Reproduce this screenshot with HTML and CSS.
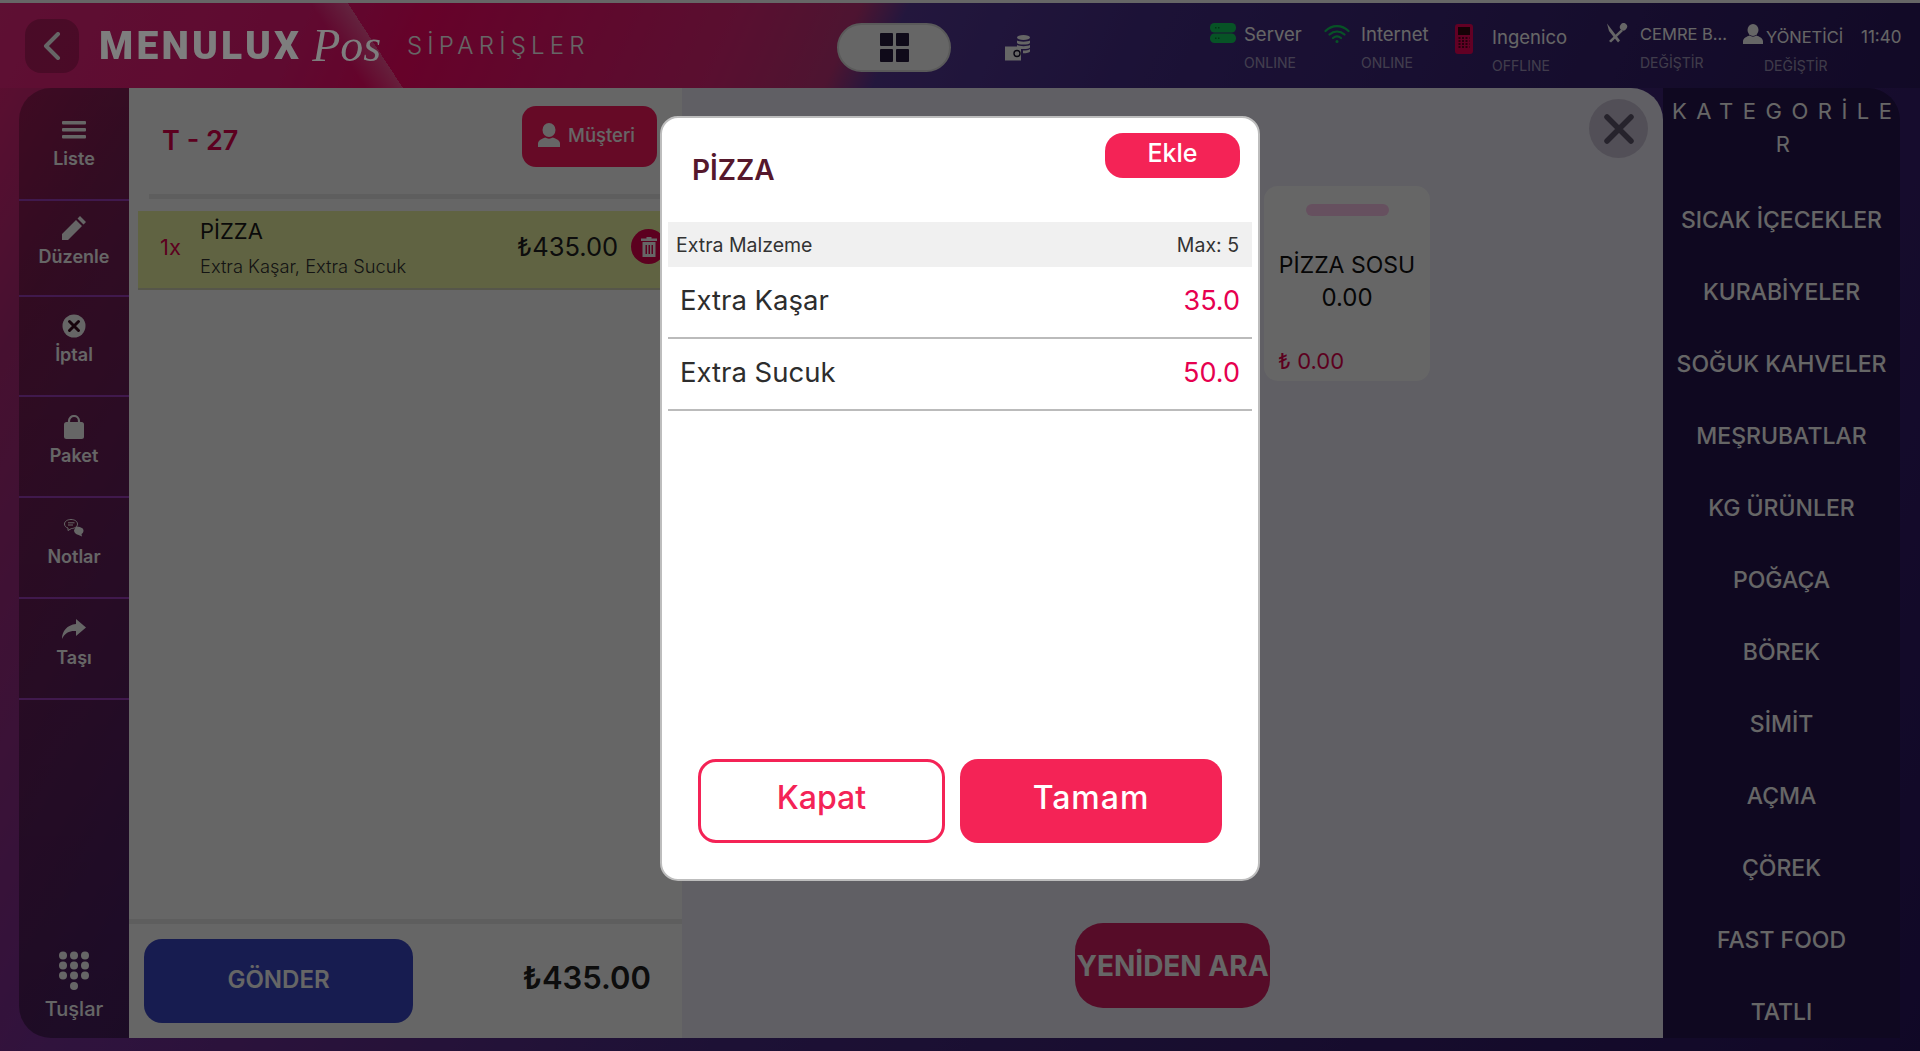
FILE: index.html
```html
<!DOCTYPE html>
<html lang="tr">
<head>
    <title>Menulux Pos - Siparişler</title>
    <meta charset="UTF-8" />
    <meta name="viewport" content="width=device-width, initial-scale=1.0" />
    <link rel="stylesheet" href="styles.css">
</head>
<body>
    <div class="shell">
        <header class="topbar">
            <div class="top-left">
                <button class="back-btn" title="Geri">
                    <svg width="18" height="28" viewBox="0 0 18 28"><path d="M15 2 3 14l12 12" fill="none" stroke="#fff" stroke-width="4" stroke-linecap="round" stroke-linejoin="round"/></svg>
                </button>
                <div class="logo">
                    <span class="logo-word">MENULUX</span>
                    <span class="logo-pos">Pos</span>
                </div>
                <span class="page-title">SİPARİŞLER</span>
            </div>

            <div class="view-toggle">
                <span class="tile"></span><span class="tile"></span><span class="tile"></span><span class="tile"></span>
            </div>

            <svg class="wallet" width="26" height="26" viewBox="0 0 26 26">
                <g fill="#fff">
                    <ellipse cx="18.5" cy="2.5" rx="6.5" ry="2.5"/>
                    <path d="M12 5.5c2 1.5 11 1.500 13 0v2.500c-1 2-12 2-13 0zM12 10c2 1.500 11 1.500 13 0v2.500c-1 2-12 2-13 0zM18 15.500c3 0 6-.5 7-1.500v2.500c-.5 1-3 1.800-7 1.800z"/>
                    <path d="M0 11.500h16v14H0z"/>
                </g>
                <circle cx="12" cy="18.500" r="3" fill="none" stroke="#17102c" stroke-width="1.400"/>
            </svg>

            <div class="status-bar">
                <div class="status status-server">
                    <svg width="26" height="20" viewBox="0 0 26 20">
                        <rect width="26" height="9.500" rx="4.500" fill="#12d060"/><rect y="10.500" width="26" height="9.500" rx="4.500" fill="#12d060"/>
                        <path d="M5 4.700h5M5 15.200h5" stroke="#083" stroke-width="1.500" stroke-dasharray="1.500 1.500"/>
                    </svg>
                    <div><p class="status-name">Server</p><p class="status-sub">ONLINE</p></div>
                </div>
                <div class="status status-net">
                    <svg width="26" height="20" viewBox="0 0 26 20" fill="none" stroke="#12d060" stroke-width="2.200" stroke-linecap="round">
                        <path d="M1.500 7c6.500-6.500 16.500-6.500 23 0M5.500 10.500c4.500-4 10.500-4 15 0M9 14c2.500-2 5.500-2 8 0"/>
                        <circle cx="13" cy="17.500" r="1.500" fill="#12d060" stroke="none"/>
                    </svg>
                    <div><p class="status-name">Internet</p><p class="status-sub">ONLINE</p></div>
                </div>
                <div class="status status-pos">
                    <svg width="18" height="30" viewBox="0 0 18 30">
                        <rect width="18" height="30" rx="3" fill="#f5005a"/>
                        <rect x="3" y="3" width="12" height="8" fill="#33060f"/>
                        <path d="M3.500 14h11M3.500 17h11M3.500 20h11M3.500 23h11" stroke="#33060f" stroke-width="1.600" stroke-dasharray="2 1.500"/>
                    </svg>
                    <div><p class="status-name">Ingenico</p><p class="status-sub">OFFLINE</p></div>
                </div>
                <div class="status status-venue">
                    <svg width="22" height="20" viewBox="0 0 22 20" fill="#fff">
                        <path d="M1 .5 14 17.500 12 19.500 3 8z"/>
                        <ellipse cx="17.500" cy="3.800" rx="3.500" ry="3.800" transform="rotate(35 17.500 3.800)"/>
                        <path d="M15 6.500 17 8 5 19.500 3 18z"/>
                    </svg>
                    <div><p class="status-name status-small">CEMRE B...</p><p class="status-sub">DEĞİŞTİR</p></div>
                </div>
                <div class="status status-user">
                    <svg width="20" height="20" viewBox="0 0 20 20" fill="#fff">
                        <ellipse cx="10" cy="6" rx="5.500" ry="6"/>
                        <path d="M0 20v-2.500C0 14 4 12.500 6.500 11.500c2 1.500 5 1.500 7 0 2.500 1 6.500 2.500 6.500 6V20z"/>
                    </svg>
                    <div><p class="status-name status-small">YÖNETİCİ</p><p class="status-sub">DEĞİŞTİR</p></div>
                </div>
                <span class="clock">11:40</span>
            </div>
        </header>

        <div class="content">
            <nav class="sidebar">
                <div class="side-item side-liste">
                    <svg width="24" height="18" viewBox="0 0 24 18" fill="#fff"><rect width="24" height="3.500" rx="1"/><rect y="7" width="24" height="3.500" rx="1"/><rect y="14" width="24" height="3.500" rx="1"/></svg>
                    <span>Liste</span>
                </div>
                <div class="side-item side-edit">
                    <svg width="24" height="24" viewBox="0 0 24 24" fill="#fff"><path d="M0 24v-6L14 4l6 6L6 24zM15.500 2.500 18 0l6 6-2.500 2.500z"/></svg>
                    <span>Düzenle</span>
                </div>
                <div class="side-item side-cancel">
                    <svg width="24" height="24" viewBox="0 0 24 24"><circle cx="12" cy="12" r="11.500" fill="#fff"/><path d="m7.500 7.500 9 9m0-9-9 9" stroke="#3a0a20" stroke-width="3" stroke-linecap="round"/></svg>
                    <span>İptal</span>
                </div>
                <div class="side-item">
                    <svg width="20" height="24" viewBox="0 0 20 24"><rect y="7" width="20" height="17" rx="2.500" fill="#fff"/><path d="M5 11V6a5 5 0 0 1 10 0v5" fill="none" stroke="#fff" stroke-width="2.200"/></svg>
                    <span>Paket</span>
                </div>
                <div class="side-item">
                    <svg width="20" height="18" viewBox="0 0 20 18">
                        <path d="M12 7.500c3 0 7.500 1 7.500 4 0 2-1 3-2 3.500l.5 2.500-4-1.800c-2-.5-4-2-4-4.500z" fill="#fff"/>
                        <path d="M7 .5c3.500 0 6.500 1.800 6.500 4.500S10.500 9.500 7.500 9.500L4 11.500V9C2 8.500.5 7 .5 5 .5 2.300 3.500.5 7 .5z" fill="#6a1a4a" stroke="#fff"/>
                        <path d="M4 3.800h6.500M4 6h5" stroke="#fff"/>
                    </svg>
                    <span>Notlar</span>
                </div>
                <div class="side-item">
                    <svg width="24" height="20" viewBox="0 0 24 20" fill="#fff"><path d="M14 0l10 8.500L14 17v-5C8 11.500 3 13.500 0 20c0-8 5-14 14-15z"/></svg>
                    <span>Taşı</span>
                </div>
                <div class="side-keys">
                    <svg width="30" height="40" viewBox="0 0 30 40" fill="#fff">
                        <ellipse cx="4" cy="4.500" rx="4" ry="4"/><ellipse cx="15" cy="4.500" rx="4" ry="4"/><ellipse cx="26" cy="4.500" rx="4" ry="4"/>
                        <ellipse cx="4" cy="14.500" rx="4" ry="4"/><ellipse cx="15" cy="14.500" rx="4" ry="4"/><ellipse cx="26" cy="14.500" rx="4" ry="4"/>
                        <ellipse cx="4" cy="24.500" rx="4" ry="4"/><ellipse cx="15" cy="24.500" rx="4" ry="4"/><ellipse cx="26" cy="24.500" rx="4" ry="4"/>
                        <ellipse cx="15" cy="35" rx="4" ry="4"/>
                    </svg>
                    <span>Tuşlar</span>
                </div>
            </nav>

            <section class="ticket">
                <div class="ticket-head">
                    <h2 class="table-no">T - 27</h2>
                    <button class="customer-btn">
                        <svg width="22" height="24" viewBox="0 0 22 24" fill="#fff"><ellipse cx="11" cy="7" rx="6.500" ry="7"/><path d="M0 24v-3.500C0 17 5 15.500 7 14.500c2.500 1.500 5.500 1.500 8 0 2 1 7 2.500 7 6V24z"/></svg>
                        Müşteri
                    </button>
                </div>
                <div class="ticket-rule"></div>
                <div class="order-row">
                    <span class="qty">1x</span>
                    <div class="order-info">
                        <p class="order-name">PİZZA</p>
                        <p class="order-extra">Extra Kaşar, Extra Sucuk</p>
                    </div>
                    <span class="order-price">₺435.00</span>
                    <span class="trash">
                        <svg width="16" height="20" viewBox="0 0 16 20" fill="#fff"><path d="M5.500 0h5v1.500H16V4H0V1.500h5.500zM1.500 5h13v15h-13zM4.500 8v9h1.500V8zm3 0v9H9V8zm3 0v9H12V8z" fill-rule="evenodd"/></svg>
                    </span>
                </div>
                <div class="ticket-foot">
                    <button class="send-btn">GÖNDER</button>
                    <span class="total">₺435.00</span>
                </div>
            </section>

            <section class="products">
                <button class="close-btn" title="Kapat">
                    <svg width="30" height="30" viewBox="0 0 30 30"><path d="m3 3 24 24m0-24L3 27" stroke="#60586f" stroke-width="5.500" stroke-linecap="round"/></svg>
                </button>
                <div class="product-card">
                    <div class="product-pill"></div>
                    <p class="product-name">PİZZA SOSU</p>
                    <p class="product-sub">0.00</p>
                    <p class="product-price">₺ 0.00</p>
                </div>
                <button class="retry-btn">YENİDEN ARA</button>
            </section>

            <aside class="categories">
                <h3 class="cat-title">KATEGORİLE<br>R</h3>
                <ul class="cat-list">
                    <li>SICAK İÇECEKLER</li>
                    <li>KURABİYELER</li>
                    <li>SOĞUK KAHVELER</li>
                    <li>MEŞRUBATLAR</li>
                    <li>KG ÜRÜNLER</li>
                    <li>POĞAÇA</li>
                    <li>BÖREK</li>
                    <li>SİMİT</li>
                    <li>AÇMA</li>
                    <li>ÇÖREK</li>
                    <li>FAST FOOD</li>
                    <li>TATLI</li>
                </ul>
            </aside>
        </div>
    </div>

    <div class="backdrop"></div>

    <div class="modal">
        <div class="modal-head">
            <h2 class="modal-title">PİZZA</h2>
            <button class="add-btn">Ekle</button>
        </div>
        <div class="group-row"><span>Extra Malzeme</span><span>Max: 5</span></div>
        <div class="option-row"><span>Extra Kaşar</span><span class="option-price">35.0</span></div>
        <div class="option-row"><span>Extra Sucuk</span><span class="option-price">50.0</span></div>
        <div class="modal-foot">
            <button class="btn-outline">Kapat</button>
            <button class="btn-solid">Tamam</button>
        </div>
    </div>
</body>
</html>
```

FILE: styles.css
```css
* {
    box-sizing: border-box;
}

body {
    font-family: 'Inter', 'Open Sans', sans-serif;
    margin: 0;
    padding-top: 3px;
    background: #fff;
    height: 1051px;
    overflow: hidden;
}

p, h2, h3, ul {
    margin: 0;
    padding: 0;
}

button {
    font-family: inherit;
    border: none;
    padding: 0;
}

.shell {
    height: 1048px;
    background: linear-gradient(120deg, #f02478 0%, #b02a78 8%, #78309a 26%, #4a2c86 52%, #2a1560 100%);
}

/* Top bar */
.topbar {
    height: 85px;
    display: flex;
    align-items: center;
    color: #fff;
    background:
        linear-gradient(57deg, transparent 18.5%, rgba(255, 255, 255, 0.3) 20.4%, transparent 20.4%),
        linear-gradient(114deg, #eb2880 0%, #ee1978 16%, #ff0568 22%, #df2678 38%, #c1347a 44%, #583a9a 46.5%, #462d88 60%, #2d1960 100%);
}

.top-left {
    width: 837px;
    padding-left: 25px;
    display: flex;
    align-items: center;
}

.back-btn {
    width: 54px;
    height: 54px;
    border-radius: 16px;
    background: rgba(0, 0, 0, 0.22);
    display: flex;
    align-items: center;
    justify-content: center;
}

/* the logo picture is not dimmed as much as the rest */
.logo {
    margin-left: 20px;
    width: 287px;
    display: flex;
    align-items: center;
    color: #7e7e7e;
    position: relative;
    z-index: 2;
}

.logo-word {
    font-family: 'Roboto', sans-serif;
    font-weight: 900;
    font-size: 39px;
    letter-spacing: 3.2px;
}

.logo-pos {
    font-family: 'Liberation Serif', serif;
    font-style: italic;
    font-size: 46px;
    margin-left: 10px;
}

.page-title {
    font-size: 24px;
    font-weight: 300;
    letter-spacing: 5.2px;
    margin-left: 21px;
}

.view-toggle {
    width: 114px;
    height: 49px;
    margin-top: 4px;
    border-radius: 25px;
    background: #fff;
    border: 2px solid #e0e0e0;
    display: grid;
    grid-template-columns: 13px 13px;
    grid-template-rows: 13px 13px;
    gap: 3px;
    justify-content: center;
    align-content: center;
}

.tile {
    background: #26193f;
    border-radius: 1px;
}

.wallet {
    margin-left: 54px;
    margin-top: 4px;
}

.status-bar {
    margin-left: auto;
    margin-right: 20px;
    width: 690px;
    display: grid;
    grid-template-columns: 114px 131px 151px 137px 118px 39px;
    align-self: flex-start;
    padding-top: 20px;
}

.status {
    display: flex;
    align-items: flex-start;
    gap: 8px;
}

.status-net {
    gap: 11px;
}

.status-pos {
    gap: 19px;
}

.status-venue {
    gap: 12px;
}

.status-user {
    gap: 3px;
}

.status-pos > div,
.status-user > div {
    padding-top: 3px;
}

.status-pos > svg,
.status-net > svg,
.status-user > svg {
    margin-top: 1px;
}

.status-name {
    font-size: 18.5px;
    line-height: 22px;
}

.status-small {
    font-size: 16.5px;
    white-space: nowrap;
}

.status-sub {
    font-size: 14px;
    line-height: 20px;
    margin-top: 8px;
    color: rgba(255, 255, 255, 0.55);
    white-space: nowrap;
}

.status-user .status-sub {
    margin-left: -2px;
}

.clock {
    font-size: 17px;
    line-height: 22px;
    padding-top: 3px;
    white-space: nowrap;
}

/* Main area */
.content {
    display: flex;
    height: 950px;
    padding-left: 19px;
}

.sidebar {
    width: 110px;
    border-radius: 32px 0 0 32px;
    background: linear-gradient(180deg, rgba(0, 0, 0, 0.28), rgba(0, 0, 0, 0.38));
    color: #fff;
    display: flex;
    flex-direction: column;
}

.side-item {
    height: 101px;
    padding-top: 18px;
    border-bottom: 2px solid #a040c0;
    display: flex;
    flex-direction: column;
    align-items: center;
    font-size: 18px;
    font-weight: 600;
}

.side-item svg {
    height: 24px;
}

.side-item span {
    margin-top: 4px;
    line-height: 26px;
}

.side-liste {
    height: 113px;
    padding-top: 30px;
}

.side-edit {
    height: 96px;
    padding-top: 15px;
}

.side-cancel {
    height: 100px;
    padding-top: 17px;
}

.side-keys {
    margin-top: auto;
    padding-bottom: 16px;
    display: flex;
    flex-direction: column;
    align-items: center;
    font-size: 20px;
    font-weight: 500;
}

.side-keys span {
    margin-top: 5px;
    line-height: 26px;
}

.ticket {
    width: 553px;
    background: #fff;
    display: flex;
    flex-direction: column;
}

.ticket-head {
    height: 106px;
    padding: 18px 25px 0 33px;
    display: flex;
    justify-content: space-between;
}

.table-no {
    font-size: 27px;
    font-weight: 600;
    color: #e6004f;
    padding-top: 18px;
}

.customer-btn {
    width: 135px;
    height: 61px;
    border-radius: 14px;
    background: #ff1a60;
    color: #fff;
    font-size: 18.5px;
    font-weight: 500;
    display: flex;
    align-items: center;
    gap: 8px;
    padding: 0 0 3px 16px;
}

.ticket-rule {
    height: 5px;
    margin-left: 20px;
    background: #ececec;
}

.order-row {
    height: 79px;
    width: 537px;
    margin: 12px 0 0 9px;
    padding-bottom: 6px;
    background: #f0f8a6;
    border-bottom: 2px solid #d8d8b8;
    display: flex;
    align-items: center;
}

.qty {
    width: 62px;
    padding-left: 22px;
    font-size: 22px;
    color: #e6004f;
}

.order-info {
    width: 317px;
}

.order-name {
    font-size: 22px;
    line-height: 30px;
    color: #1b1b1b;
}

.order-extra {
    font-size: 18.3px;
    font-weight: 300;
    line-height: 24px;
    margin-top: 8px;
    color: #333;
}

.order-price {
    width: 100px;
    font-size: 25.5px;
    color: #222;
    white-space: nowrap;
}

.trash {
    width: 35px;
    height: 35px;
    margin-left: 14px;
    border-radius: 50%;
    background: #e6004f;
    display: flex;
    align-items: center;
    justify-content: center;
}

.ticket-foot {
    margin-top: auto;
    height: 119px;
    border-top: 5px solid #ececec;
    padding: 15px 31px 0 15px;
    display: flex;
    justify-content: space-between;
}

.send-btn {
    width: 269px;
    height: 84px;
    border-radius: 18px;
    background: #3b48c8;
    color: #fff;
    font-size: 24px;
    font-weight: 600;
    padding-bottom: 3px;
}

.total {
    font-size: 31px;
    font-weight: 600;
    color: #222;
    line-height: 78px;
}

.products {
    width: 981px;
    background: #f0eefa;
    border-radius: 0 32px 0 0;
    position: relative;
    padding-left: 582px;
    display: flex;
    flex-direction: column;
}

.close-btn {
    position: absolute;
    top: 11px;
    right: 15px;
    width: 59px;
    height: 59px;
    border-radius: 50%;
    background: #cdc6d9;
    display: flex;
    align-items: center;
    justify-content: center;
}

.product-card {
    width: 166px;
    height: 195px;
    margin-top: 98px;
    border-radius: 14px;
    background: #fff;
    padding-top: 18px;
    text-align: center;
    color: #111;
}

.product-pill {
    width: 83px;
    height: 12px;
    margin: 0 auto;
    border-radius: 6px;
    background: #ffc8ee;
}

.product-name {
    font-size: 23px;
    line-height: 32px;
    margin-top: 33px;
}

.product-sub {
    font-size: 24px;
    line-height: 34px;
}

.product-price {
    font-size: 22px;
    line-height: 30px;
    margin-top: 31px;
    padding-left: 14px;
    text-align: left;
    color: #e6004f;
}

.retry-btn {
    width: 195px;
    height: 85px;
    margin: auto 0 30px -189px;
    border-radius: 28px;
    background: #d72064;
    color: #fff;
    font-size: 28px;
    font-weight: 700;
    white-space: nowrap;
    display: flex;
    align-items: center;
    justify-content: center;
}

.categories {
    width: 237px;
    background: #261450;
    border-radius: 0 32px 0 0;
    color: #fff;
    text-align: center;
}

.cat-title {
    font-size: 22px;
    font-weight: 400;
    line-height: 33px;
    letter-spacing: 9.5px;
    padding: 7px 0 0 12px;
    text-indent: -3px;
    height: 132px;
    white-space: nowrap;
}

.cat-list {
    list-style: none;
    font-size: 23px;
    font-weight: 500;
}

.cat-list li {
    height: 72px;
    line-height: 0;
    white-space: nowrap;
}

/* Dimmed page and dialog */
.backdrop {
    position: fixed;
    inset: 0;
    background: rgba(0, 0, 0, 0.6);
}

.modal {
    position: absolute;
    left: 660px;
    top: 116px;
    width: 600px;
    height: 765px;
    padding: 0 6px;
    background: #fff;
    border: 2px solid #bdbdbd;
    border-radius: 18px;
    display: flex;
    flex-direction: column;
}

.modal-head {
    height: 104px;
    padding: 15px 12px 0 24px;
    display: flex;
    justify-content: space-between;
}

.modal-title {
    font-size: 28px;
    font-weight: 600;
    color: #56182c;
    padding-top: 20px;
}

.add-btn {
    width: 135px;
    height: 45px;
    border-radius: 18px;
    background: #f42356;
    color: #fff;
    font-size: 25px;
    font-weight: 500;
    padding-bottom: 5px;
}

.group-row {
    height: 45px;
    padding: 0 13px 0 8px;
    background: #f0f0f0;
    display: flex;
    justify-content: space-between;
    align-items: center;
    font-size: 19.5px;
    color: #333;
}

.option-row {
    height: 72px;
    padding: 0 12px 4px 12px;
    border-bottom: 2px solid #bbb;
    display: flex;
    justify-content: space-between;
    align-items: center;
    font-size: 27.5px;
    color: #2d2d2d;
}

.option-price {
    color: #e6004f;
    font-size: 27px;
}

.modal-foot {
    margin-top: auto;
    padding: 0 30px 36px 30px;
    display: flex;
    gap: 15px;
}

.btn-outline, .btn-solid {
    height: 84px;
    border-radius: 18px;
    font-size: 32px;
    font-weight: 500;
    padding-bottom: 8px;
}

.btn-outline {
    width: 247px;
    background: #fff;
    border: 3px solid #f42356;
    color: #f42356;
}

.btn-solid {
    width: 262px;
    background: #f42356;
    color: #fff;
    letter-spacing: 1px;
}
```
